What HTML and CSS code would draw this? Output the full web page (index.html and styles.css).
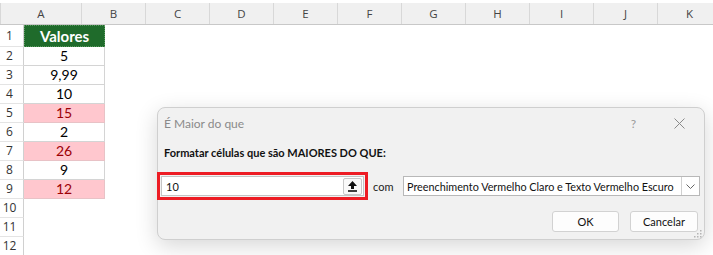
FILE: index.html
```html
<!DOCTYPE html>
<html lang="pt">
<head>
  <meta charset="UTF-8">
  <title>É Maior do que</title>
  <link rel="stylesheet" href="styles.css">
</head>
<body>

<div class="sheet">
  <div class="colheads">
    <div class="corner"></div>
    <div class="ch ch-a">A</div>
    <div class="ch">B</div>
    <div class="ch">C</div>
    <div class="ch">D</div>
    <div class="ch">E</div>
    <div class="ch">F</div>
    <div class="ch">G</div>
    <div class="ch">H</div>
    <div class="ch">I</div>
    <div class="ch">J</div>
    <div class="ch">K</div>
  </div>

  <div class="row row-first"><div class="rn">1</div><div class="cell head">Valores</div></div>
  <div class="row"><div class="rn">2</div><div class="cell">5</div></div>
  <div class="row"><div class="rn">3</div><div class="cell">9,99</div></div>
  <div class="row"><div class="rn">4</div><div class="cell">10</div></div>
  <div class="row"><div class="rn">5</div><div class="cell hit">15</div></div>
  <div class="row"><div class="rn">6</div><div class="cell">2</div></div>
  <div class="row"><div class="rn">7</div><div class="cell hit">26</div></div>
  <div class="row"><div class="rn">8</div><div class="cell">9</div></div>
  <div class="row"><div class="rn">9</div><div class="cell hit">12</div></div>
  <div class="row"><div class="rn">10</div></div>
  <div class="row"><div class="rn">11</div></div>
  <div class="row"><div class="rn">12</div></div>
</div>

<div class="dialog">
  <div class="titlebar">
    <span class="title">É Maior do que</span>
    <div class="title-btns">
      <span class="help">?</span>
      <svg class="close" width="11" height="11" viewBox="0 0 11 11">
        <path d="M0.5 0.5 L10.5 10.5 M10.5 0.5 L0.5 10.5" stroke="#8a8a8a" stroke-width="1" fill="none"/>
      </svg>
    </div>
  </div>

  <div class="label">Formatar células que são MAIORES DO QUE:</div>

  <div class="input-row">
    <div class="highlight">
      <div class="field">
        <span class="value">10</span>
        <span class="pick">
          <svg width="9" height="11" viewBox="0 0 9 11">
            <path d="M4.5 0 L9 5 L6 5 L6 8 L3 8 L3 5 L0 5 Z" fill="#111"/>
            <rect x="0" y="9.2" width="9" height="1.6" fill="#111"/>
          </svg>
        </span>
      </div>
    </div>
    <span class="com">com</span>
    <div class="select">
      <span class="select-text">Preenchimento Vermelho Claro e Texto Vermelho Escuro</span>
      <span class="select-btn">
        <svg width="9" height="5" viewBox="0 0 9 5">
          <path d="M0.5 0.5 L4.5 4.5 L8.5 0.5" stroke="#666" stroke-width="1" fill="none"/>
        </svg>
      </span>
    </div>
  </div>

  <div class="buttons">
    <button class="btn">OK</button>
    <button class="btn">Cancelar</button>
  </div>

  <svg class="grip" width="9" height="9" viewBox="0 0 9 9">
    <rect x="7" y="1" width="1.5" height="1.5" fill="#b4b4b4"/>
    <rect x="4" y="4" width="1.5" height="1.5" fill="#b4b4b4"/>
    <rect x="7" y="4" width="1.5" height="1.5" fill="#b4b4b4"/>
    <rect x="1" y="7" width="1.5" height="1.5" fill="#b4b4b4"/>
    <rect x="4" y="7" width="1.5" height="1.5" fill="#b4b4b4"/>
    <rect x="7" y="7" width="1.5" height="1.5" fill="#b4b4b4"/>
  </svg>
</div>

</body>
</html>
```

FILE: styles.css
```css
* {
  box-sizing: border-box;
}

body {
  margin: 0;
  width: 713px;
  height: 255px;
  overflow: hidden;
  background: #ffffff;
  position: relative;
  font-family: 'Lato', 'Liberation Sans', sans-serif;
}

.sheet {
  padding-top: 3px;
  background: #ffffff;
}

.colheads {
  display: flex;
  height: 22px;
  background: #f0f0f0;
  border-bottom: 1px solid #c8c8c8;
  color: #444;
  font-family: 'Open Sans', sans-serif;
  font-size: 11.5px;
}

.corner {
  width: 24px;
  position: relative;
  border-right: 1px solid #d8d8d8;
}

.corner::after {
  content: '';
  position: absolute;
  right: 3px;
  bottom: 3px;
  border-left: 12px solid transparent;
  border-bottom: 12px solid #dadada;
}

.ch {
  width: 64px;
  flex: none;
  display: flex;
  align-items: center;
  justify-content: center;
  border-right: 1px solid #d8d8d8;
}

.ch-a {
  width: 81px;
}

.row {
  display: flex;
  height: 19px;
}

.row-first {
  height: 22px;
}

.rn {
  width: 24px;
  flex: none;
  padding-right: 4px;
  text-align: center;
  font-family: 'Open Sans', sans-serif;
  font-size: 12px;
  line-height: 18px;
  color: #333;
  border-right: 1px solid #d0d0d0;
  border-bottom: 1px solid #e4e4e4;
}

.row-first .rn {
  line-height: 22px;
}

.cell {
  width: 81px;
  flex: none;
  text-align: center;
  font-size: 14px;
  line-height: 18px;
  color: #000;
  border-right: 1px solid #d4d4d4;
  border-bottom: 1px solid #d4d4d4;
}

.cell.head {
  background: #1f6b2b;
  color: #ffffff;
  font-weight: bold;
  font-size: 15px;
  line-height: 21px;
  border: 1px dotted #5a9a5f;
}

.cell.hit {
  background: #ffc7ce;
  color: #9c0006;
  border-color: #e8c2c6;
}

/* dialog over the sheet */
.dialog {
  position: absolute;
  left: 157px;
  top: 107px;
  width: 548px;
  height: 133px;
  background: #f1f1f1;
  border: 1px solid #cfcfcf;
  border-radius: 8px;
  box-shadow: 0 6px 22px rgba(0, 0, 0, 0.16);
  font-family: 'Lato', sans-serif;
  font-size: 11px;
  color: #111;
}

.titlebar {
  height: 31px;
  display: flex;
  align-items: center;
  justify-content: space-between;
  padding-left: 6px;
}

.title {
  color: #8a8a8a;
  font-size: 12px;
}

.title-btns {
  display: flex;
  align-items: center;
  gap: 38px;
  padding-right: 19px;
}

.help {
  color: #9a9a9a;
  font-size: 12px;
}

.label {
  margin-top: 6px;
  padding-left: 6px;
  font-weight: bold;
  font-size: 11px;
  height: 16px;
  line-height: 16px;
  white-space: nowrap;
}

.input-row {
  display: flex;
  align-items: center;
  margin-top: 11px;
  margin-left: -1px;
}

.highlight {
  width: 211px;
  height: 28px;
  flex: none;
  border: 3px solid #ed1c24;
  padding: 1px 0 1px 1px;
}

.field {
  height: 100%;
  width: 203px;
  background: #ffffff;
  border: 1px solid #c4c4c4;
  display: flex;
  align-items: center;
  justify-content: space-between;
  padding-left: 4px;
  padding-right: 1px;
}

.pick {
  width: 19px;
  height: 17px;
  border: 1px solid #c8c8c8;
  border-radius: 2px;
  background: #f9f9f9;
  display: flex;
  align-items: center;
  justify-content: center;
}

.com {
  margin-left: 5px;
  width: 30px;
  flex: none;
  color: #222;
}

.select {
  width: 297px;
  flex: none;
  height: 20px;
  background: #ffffff;
  border: 1px solid #b8b8b8;
  display: flex;
  align-items: center;
  justify-content: space-between;
  padding-left: 3px;
  white-space: nowrap;
  overflow: hidden;
  font-size: 10.8px;
}

.select-btn {
  width: 18px;
  height: 100%;
  border-left: 1px solid #d0d0d0;
  display: flex;
  align-items: center;
  justify-content: center;
}

.buttons {
  display: flex;
  justify-content: flex-end;
  gap: 11px;
  margin-top: 11px;
  padding-right: 6px;
}

.btn {
  width: 67px;
  height: 21px;
  background: #fdfdfd;
  border: 1px solid #d2d2d2;
  border-radius: 3px;
  font-family: 'Lato', sans-serif;
  font-size: 11px;
  color: #111;
  padding: 0;
}

.btn + .btn {
  width: 68px;
}

.grip {
  position: absolute;
  right: 2px;
  bottom: 1px;
}
```
